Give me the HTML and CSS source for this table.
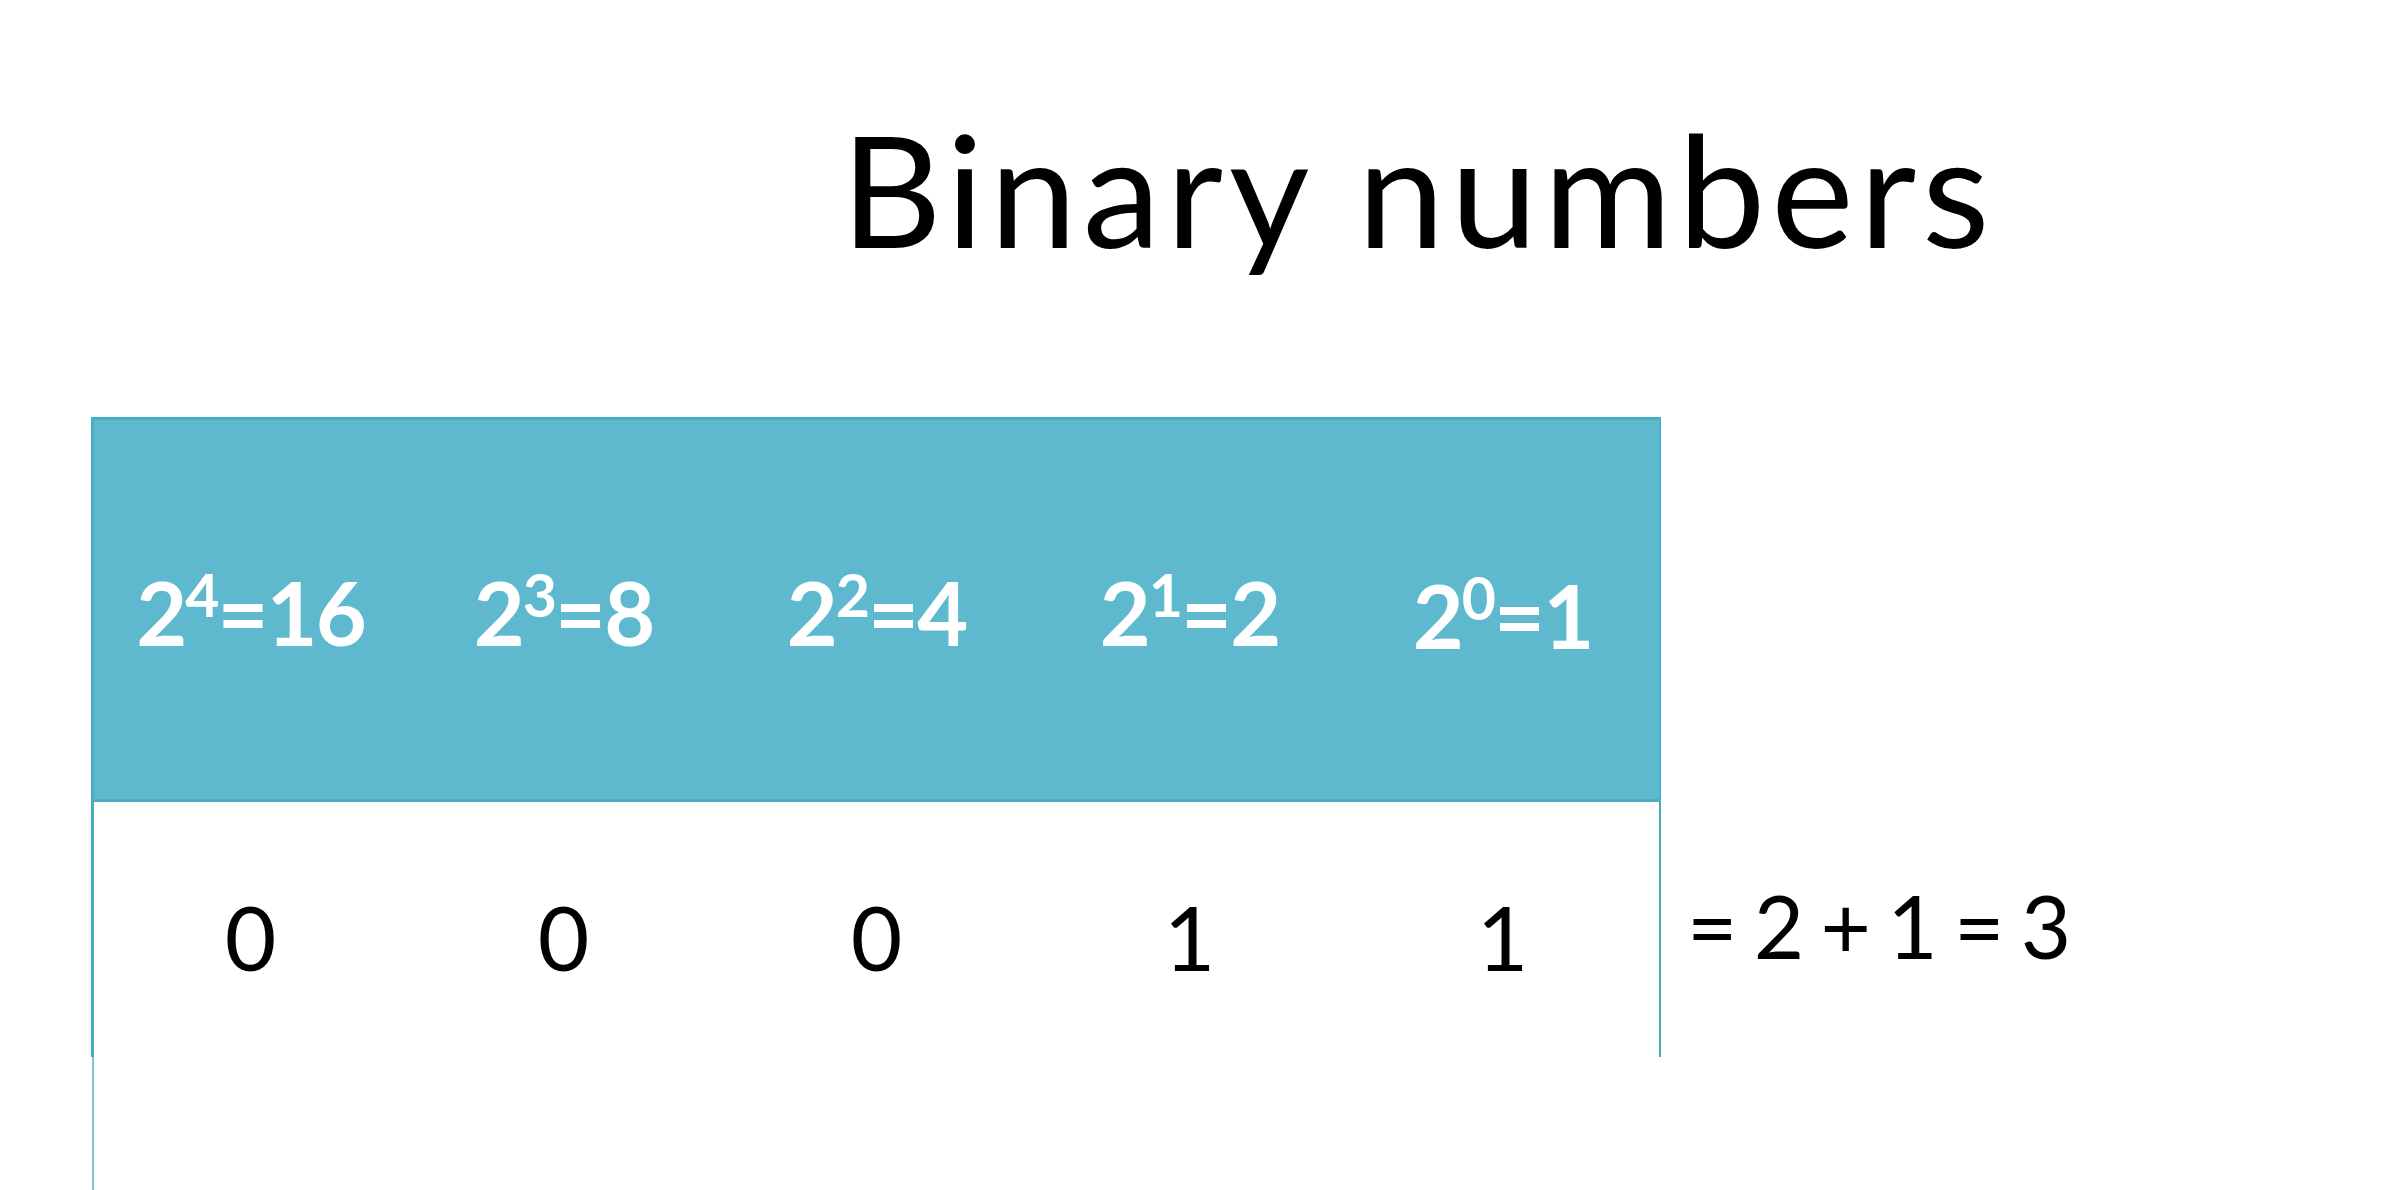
FILE: index.html
```html
<!DOCTYPE html>
<html lang="en">
<head>
<meta charset="utf-8">
<title>Binary numbers</title>
<link rel="stylesheet" href="styles.css">
</head>
<body>
<div class="slide">
  <h1 class="title">Binary numbers</h1>
  <div class="content">
    <div class="table-wrap">
      <div class="table">
        <div class="row head">
          <div class="cell">2<span class="sup">4</span>=16</div>
          <div class="cell">2<span class="sup">3</span>=8</div>
          <div class="cell">2<span class="sup">2</span>=4</div>
          <div class="cell">2<span class="sup">1</span>=2</div>
          <div class="cell low">2<span class="sup">0</span>=1</div>
        </div>
        <div class="row body">
          <div class="cell">0</div>
          <div class="cell">0</div>
          <div class="cell">0</div>
          <div class="cell">1</div>
          <div class="cell">1</div>
        </div>
      </div>
      <div class="tail"></div>
    </div>
    <div class="equation">= 2 + 1 = 3</div>
  </div>
</div>
</body>
</html>
```
FILE: styles.css
```css
html, body {
  margin: 0;
  padding: 0;
  background: #ffffff;
}

.slide {
  width: 2398px;
  height: 1190px;
  overflow: hidden;
  font-family: "Lato", "Liberation Sans", sans-serif;
  color: #000000;
}

.title {
  margin: 0;
  padding: 110px 0 0 841px;
  font-size: 156px;
  font-weight: 400;
  line-height: 1;
  height: 156px;
  letter-spacing: 6px;
}

.content {
  display: flex;
  align-items: flex-start;
  padding-top: 151px;
}

.table-wrap {
  margin-left: 91px;
  display: flex;
  flex-direction: column;
}

.table {
  width: 1570px;
  box-sizing: border-box;
}

.row {
  display: grid;
  grid-template-columns: repeat(5, 1fr);
  box-sizing: border-box;
}

.head {
  height: 385px;
  background: #5eb9cf;
  border: 3px solid #4bacc6;
  border-right-width: 2px;
  padding-top: 148px;
  color: #ffffff;
  font-weight: 700;
  font-size: 88px;
  line-height: 1;
  letter-spacing: -2px;
}

.body {
  height: 255px;
  border-left: 3px solid #4bacc6;
  border-right: 2px solid #4bacc6;
  padding-top: 90px;
  font-size: 89px;
  line-height: 1;
}

.cell {
  text-align: center;
  white-space: nowrap;
}

.sup {
  font-size: 59px;
  line-height: 0;
  vertical-align: 29px;
}

.head .low {
  padding-top: 3px;
}

.tail {
  height: 133px;
  margin-left: 1px;
  border-left: 2px solid #7cc5d7;
}

.equation {
  margin-top: 465px;
  margin-left: 26px;
  font-size: 87px;
  line-height: 1;
  white-space: nowrap;
  word-spacing: -6px;
}
```
